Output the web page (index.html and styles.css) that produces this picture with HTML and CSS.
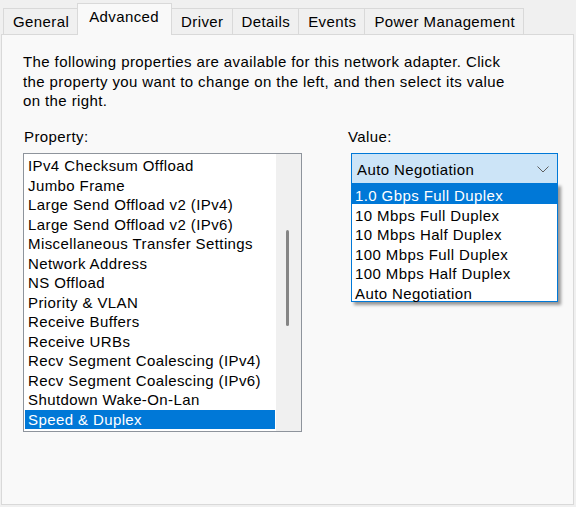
FILE: index.html
```html
<!DOCTYPE html>
<html>
  <head>
    <meta charset="utf-8">
    <link rel="stylesheet" href="styles.css">
    <title>Adapter Properties</title>
  </head>
  <body>
    <div class="dialog">
      <div class="tabs">
        <div class="tab">General</div>
        <div class="tab active">Advanced</div>
        <div class="tab">Driver</div>
        <div class="tab">Details</div>
        <div class="tab">Events</div>
        <div class="tab">Power Management</div>
      </div>

      <div class="page">
        <p class="intro">
          The following properties are available for this network adapter. Click<br>
          the property you want to change on the left, and then select its value<br>
          on the right.
        </p>

        <div class="fields">
          <div class="field field-property">
            <div class="label">Property:</div>
            <div class="listbox">
              <ul class="items">
                <li>IPv4 Checksum Offload</li>
                <li>Jumbo Frame</li>
                <li>Large Send Offload v2 (IPv4)</li>
                <li>Large Send Offload v2 (IPv6)</li>
                <li>Miscellaneous Transfer Settings</li>
                <li>Network Address</li>
                <li>NS Offload</li>
                <li>Priority &amp; VLAN</li>
                <li>Receive Buffers</li>
                <li>Receive URBs</li>
                <li>Recv Segment Coalescing (IPv4)</li>
                <li>Recv Segment Coalescing (IPv6)</li>
                <li>Shutdown Wake-On-Lan</li>
                <li class="selected">Speed &amp; Duplex</li>
              </ul>
              <div class="scrollbar">
                <div class="thumb"></div>
              </div>
            </div>
          </div>

          <div class="field field-value">
            <div class="label">Value:</div>
            <div class="combo">
              <div class="combo-box">
                <span>Auto Negotiation</span>
                <svg class="chevron" width="12" height="7" viewBox="0 0 12 7">
                  <path d="M0.5 0.5 L6 6 L11.5 0.5" fill="none" stroke="#5f5f5f" stroke-width="1"/>
                </svg>
              </div>
              <ul class="dropdown">
                <li class="selected">1.0 Gbps Full Duplex</li>
                <li>10 Mbps Full Duplex</li>
                <li>10 Mbps Half Duplex</li>
                <li>100 Mbps Full Duplex</li>
                <li>100 Mbps Half Duplex</li>
                <li>Auto Negotiation</li>
              </ul>
            </div>
          </div>
        </div>
      </div>
    </div>
  </body>
</html>
```

FILE: styles.css
```css
html, body {
  margin: 0;
  padding: 0;
  background: #f0f0f0;
  font-family: "Liberation Sans", Arial, sans-serif;
  font-size: 15px;
  letter-spacing: 0.4px;
  color: #000;
}

.dialog {
  width: 576px;
  height: 507px;
  display: flex;
  flex-direction: column;
}

/* tab strip */

.tabs {
  display: flex;
  align-items: flex-end;
  height: 34px;
  padding-left: 3px;
}

.tab {
  height: 26px;
  line-height: 26px;
  padding: 0 8px 0 9px;
  background: #f0f0f0;
  border: 1px solid #d9d9d9;
  border-bottom: none;
  margin-right: -1px;
  box-sizing: border-box;
}

.tab.active {
  position: relative;
  z-index: 1;
  height: 32px;
  line-height: 26px;
  padding: 0 12px 0 11px;
  background: #f9f9f9;
  margin-bottom: -1px;
}

/* property page */

.page {
  flex: 1;
  margin: 0 2px 2px 1px;
  background: #f9f9f9;
  border: 1px solid #d9d9d9;
  padding: 17px 0 0 21px;
}

.intro {
  margin: 0;
  line-height: 19.5px;
}

.fields {
  display: flex;
  margin-top: 16px;
}

.label {
  line-height: 19.5px;
  margin-left: 1px;
}

.field-property {
  width: 279px;
}

.field-value {
  margin-left: 45px;
}

/* list box */

.listbox {
  display: flex;
  margin-top: 7px;
  width: 279px;
  height: 279px;
  box-sizing: border-box;
  border: 1px solid #8e949c;
  background: #fff;
}

.items {
  flex: 1;
  list-style: none;
  margin: 0;
  padding: 2px 1px 0 1px;
}

.items li {
  height: 19.5px;
  line-height: 20px;
  padding-left: 3px;
  white-space: nowrap;
}

.selected {
  background: #0078d7;
  color: #fff;
}

.scrollbar {
  width: 25px;
  background: #f0f0f0;
  position: relative;
}

.thumb {
  position: absolute;
  left: 10px;
  top: 76px;
  width: 3px;
  height: 96px;
  border-radius: 2px;
  background: #858585;
}

/* combo box with its open list */

.combo {
  position: relative;
  margin-top: 7px;
  margin-left: 4px;
  width: 207px;
}

.combo-box {
  height: 31px;
  box-sizing: border-box;
  border: 1px solid #0078d7;
  background: #cce4f7;
  display: flex;
  align-items: center;
  justify-content: space-between;
  padding: 1px 8px 0 5px;
}

.dropdown {
  position: absolute;
  top: 30px;
  left: 0;
  width: 207px;
  box-sizing: border-box;
  list-style: none;
  margin: 0;
  padding: 0;
  background: #fff;
  border: 1px solid #0078d7;
  box-shadow: 3px 3px 3px rgba(0, 0, 0, 0.4);
}

.dropdown li {
  height: 19.5px;
  line-height: 23px;
  padding-left: 3px;
  white-space: nowrap;
}
```
